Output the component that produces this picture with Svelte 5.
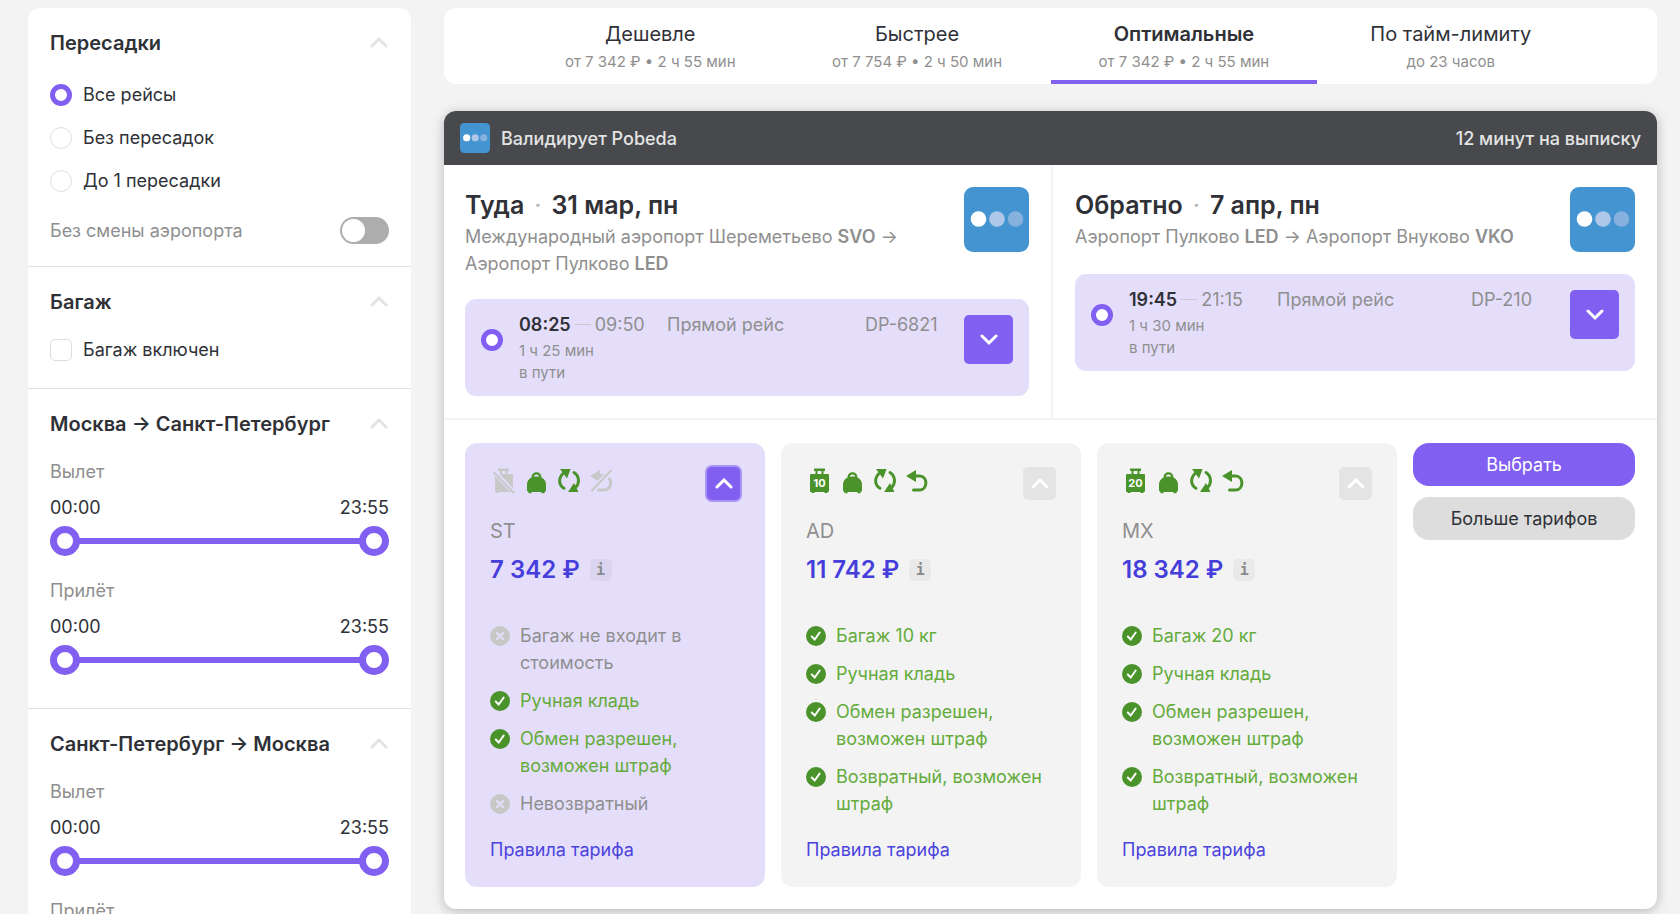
<script>
  const stops = ['Все рейсы', 'Без пересадок', 'До 1 пересадки'];
  let selectedStop = $state('Все рейсы');
  let sameAirport = $state(false);
  let withBaggage = $state(false);

  const directions = $state([
    { title: 'Москва → Санкт-Петербург', ranges: [{ label: 'Вылет', from: 0, to: 1435 }, { label: 'Прилёт', from: 0, to: 1435 }] },
    { title: 'Санкт-Петербург → Москва', ranges: [{ label: 'Вылет', from: 0, to: 1435 }, { label: 'Прилёт', from: 0, to: 1435 }] }
  ]);

  const tabs = [
    { title: 'Дешевле', info: 'от 7 342 ₽ • 2 ч 55 мин' },
    { title: 'Быстрее', info: 'от 7 754 ₽ • 2 ч 50 мин' },
    { title: 'Оптимальные', info: 'от 7 342 ₽ • 2 ч 55 мин' },
    { title: 'По тайм-лимиту', info: 'до 23 часов' }
  ];
  let activeTab = $state(2);

  const flights = [
    {
      name: 'Туда', date: '31 мар, пн',
      from: 'Международный аэропорт Шереметьево', fromCode: 'SVO',
      to: 'Аэропорт Пулково', toCode: 'LED',
      departure: '08:25', arrival: '09:50', duration: '1 ч 25 мин', number: 'DP-6821'
    },
    {
      name: 'Обратно', date: '7 апр, пн',
      from: 'Аэропорт Пулково', fromCode: 'LED',
      to: 'Аэропорт Внуково', toCode: 'VKO',
      departure: '19:45', arrival: '21:15', duration: '1 ч 30 мин', number: 'DP-210'
    }
  ];

  const fares = [
    {
      code: 'ST', price: '7 342 ₽', baggage: 0, refund: false,
      features: [
        { text: 'Багаж не входит в стоимость', ok: false },
        { text: 'Ручная кладь', ok: true },
        { text: 'Обмен разрешен, возможен штраф', ok: true },
        { text: 'Невозвратный', ok: false }
      ]
    },
    {
      code: 'AD', price: '11 742 ₽', baggage: 10, refund: true,
      features: [
        { text: 'Багаж 10 кг', ok: true },
        { text: 'Ручная кладь', ok: true },
        { text: 'Обмен разрешен, возможен штраф', ok: true },
        { text: 'Возвратный, возможен штраф', ok: true }
      ]
    },
    {
      code: 'MX', price: '18 342 ₽', baggage: 20, refund: true,
      features: [
        { text: 'Багаж 20 кг', ok: true },
        { text: 'Ручная кладь', ok: true },
        { text: 'Обмен разрешен, возможен штраф', ok: true },
        { text: 'Возвратный, возможен штраф', ok: true }
      ]
    }
  ];
  let selectedFare = $state('ST');

  function formatTime(minutes) {
    const h = String(Math.floor(minutes / 60)).padStart(2, '0');
    const m = String(minutes % 60).padStart(2, '0');
    return `${h}:${m}`;
  }
</script>

{#snippet chevron(down)}
  <svg class="chevron" viewBox="0 0 20 12" aria-hidden="true">
    <path d={down ? 'M3 2 L10 9 L17 2' : 'M3 9 L10 2 L17 9'} />
  </svg>
{/snippet}

{#snippet logo()}
  <svg class="logo" viewBox="0 0 65 65" aria-hidden="true">
    <rect width="65" height="65" rx="9" fill="#4394d0" />
    <circle cx="14.5" cy="32" r="7.8" fill="#fff" />
    <circle cx="33" cy="32" r="7.8" fill="#afc8ea" />
    <circle cx="51.5" cy="32" r="7.8" fill="#86b0de" />
  </svg>
{/snippet}

{#snippet sectionTitle(text)}
  <div class="section-head">
    <h2>{text}</h2>
    <button type="button" class="collapse" aria-label="Свернуть">{@render chevron(false)}</button>
  </div>
{/snippet}

<div class="page">
  <aside class="filters">
    <section class="transfers">
      {@render sectionTitle('Пересадки')}
      <div class="options">
        {#each stops as stop}
          <label class="option">
            <input type="radio" class="radio" name="stops" value={stop} bind:group={selectedStop} />
            <span>{stop}</span>
          </label>
        {/each}
      </div>
      <label class="switch-row">
        <span>Без смены аэропорта</span>
        <input type="checkbox" role="switch" class="switch" aria-checked={sameAirport} bind:checked={sameAirport} />
      </label>
    </section>

    <section class="baggage">
      {@render sectionTitle('Багаж')}
      <label class="option">
        <input type="checkbox" class="checkbox" bind:checked={withBaggage} />
        <span>Багаж включен</span>
      </label>
    </section>

    {#each directions as direction}
      <section class="times">
        {@render sectionTitle(direction.title)}
        {#each direction.ranges as range}
          <div class="range">
            <p class="range-label">{range.label}</p>
            <div class="range-values">
              <span>{formatTime(range.from)}</span>
              <span>{formatTime(range.to)}</span>
            </div>
            <div class="slider">
              <input type="range" min="0" max="1435" step="5" aria-label="{range.label} от" bind:value={range.from} />
              <input type="range" min="0" max="1435" step="5" aria-label="{range.label} до" bind:value={range.to} />
            </div>
          </div>
        {/each}
      </section>
    {/each}
  </aside>

  <main>
    <nav class="tabs">
      {#each tabs as tab, i}
        <button type="button" class="tab" class:active={i === activeTab} onclick={() => (activeTab = i)}>
          <span class="tab-title">{tab.title}</span>
          <span class="tab-info">{tab.info}</span>
        </button>
      {/each}
    </nav>

    <article class="offer">
      <header class="offer-head">
        <span class="carrier">{@render logo()} Валидирует Pobeda</span>
        <span>12 минут на выписку</span>
      </header>

      <div class="flights">
        {#each flights as flight}
          <section class="flight">
            <div class="flight-head">
              <div>
                <h3>{flight.name}<i>·</i>{flight.date}</h3>
                <p class="route">
                  {flight.from} <b>{flight.fromCode}</b> → {flight.to} <b>{flight.toCode}</b>
                </p>
              </div>
              {@render logo()}
            </div>
            <div class="segment">
              <div class="segment-control">
                <input type="radio" class="radio" name={flight.number} aria-label={flight.number} checked />
              </div>
              <div>
                <p class="hours"><b>{flight.departure}</b><i></i>{flight.arrival}</p>
                <p class="duration">{flight.duration}<br />в пути</p>
              </div>
              <p>Прямой рейс</p>
              <p>{flight.number}</p>
              <button type="button" class="segment-control expand" aria-label="Подробнее">{@render chevron(true)}</button>
            </div>
          </section>
        {/each}
      </div>

      <div class="fares">
        {#each fares as fare}
          <section class="fare" class:selected={fare.code === selectedFare}>
            <div class="fare-head">
              <div class="fare-icons">
                {#if fare.baggage}
                  <svg viewBox="0 0 27 27" aria-hidden="true">
                    <path d="M8 1.5h11v2.6h-1.5V7H22a1 1 0 0 1 1 1v16a1 1 0 0 1-1 1h-.5v1h-3v-1h-10v1h-3v-1H5a1 1 0 0 1-1-1V8a1 1 0 0 1 1-1h4.5V4.1H8z M11.5 4.1V7h4V4.1z" fill-rule="evenodd" />
                    <text x="13.5" y="20">{fare.baggage}</text>
                  </svg>
                {:else}
                  <svg class="off" viewBox="0 0 27 27" aria-hidden="true">
                    <path d="M8 1.5h11V4h-1.5V7H22a1 1 0 0 1 1 1v13.2L10 7.6V4H8z M12 4v3h3.5V4z M5 9.5L20.5 25H9v1H6v-1a1 1 0 0 1-1-1z" fill-rule="evenodd" />
                    <path d="M4 5.5L23.5 25.5" class="line thin" />
                  </svg>
                {/if}
                <svg viewBox="0 0 27 27" aria-hidden="true">
                  <path d="M8.5 10.5C8.5 3.5 18.5 3.5 18.5 10.5C21.5 12 23 14.5 23 17.5V23a2 2 0 0 1-1.5 2v1.2h-3V25h-10v1.2h-3V25A2 2 0 0 1 4 23v-5.5C4 14.5 5.5 12 8.5 10.5z M10.7 9.6h5.6C15.5 6.9 11.5 6.9 10.7 9.6z" fill-rule="evenodd" />
                </svg>
                <svg viewBox="0 0 27 27" aria-hidden="true">
                  <path d="M4 2h10.600l-3.600 9.500z M12 25h10.500l-4.500-9z" />
                  <path d="M7.500 6C2 11 2.500 18 8 21.300 M18 5.500C24 9.500 23.500 17 19.500 20.500" class="line" />
                </svg>
                {#if fare.refund}
                  <svg viewBox="0 0 27 27" aria-hidden="true">
                    <path d="M1 9L11 3v12z" />
                    <path d="M10 9H14.5C23 9 23 23 14.5 23H8.5" class="line" />
                  </svg>
                {:else}
                  <svg class="off" viewBox="0 0 27 27" aria-hidden="true">
                    <path d="M1 9L11 3v4h4.5L8.5 14z" />
                    <path d="M20.5 11.5C23.5 16 21 23 15 23H9.5" class="line" />
                    <path d="M3 23.5L22 3.5" class="line thin" />
                  </svg>
                {/if}
              </div>
              <button type="button" class="fare-toggle" aria-label="Свернуть тариф" onclick={() => (selectedFare = fare.code)}>
                {@render chevron(false)}
              </button>
            </div>
            <p class="fare-code">{fare.code}</p>
            <div class="price">
              <strong>{fare.price}</strong>
              <button type="button" class="info" aria-label="О цене">i</button>
            </div>
            <ul>
              {#each fare.features as feature}
                <li class:ok={feature.ok}>
                  <svg viewBox="0 0 20 20" aria-hidden="true">
                    <circle cx="10" cy="10" r="10" />
                    <path d={feature.ok ? 'M5.8 10.5L8.7 13.5L13.7 6.5' : 'M7 7L13 13M13 7L7 13'} />
                  </svg>
                  <span>{feature.text}</span>
                </li>
              {/each}
            </ul>
            <a href="#rules">Правила тарифа</a>
          </section>
        {/each}

        <div class="actions">
          <button type="button" class="primary">Выбрать</button>
          <button type="button">Больше тарифов</button>
        </div>
      </div>
    </article>
  </main>
</div>

<style>
  :global(body) {
    background: #f3f3f3;
  }

  .page {
    display: grid;
    grid-template-columns: 383px minmax(0, 1fr);
    gap: 33px;
    align-items: start;
    padding: 8px 23px 0 28px;
    font-family: Inter, Roboto, 'Liberation Sans', sans-serif;
    font-size: 18px;
    line-height: 27px;
    color: #2f3137;
  }

  h2,
  h3,
  p,
  ul {
    margin: 0;
    padding: 0;
  }

  button {
    padding: 0;
    border: none;
    background: none;
    font: inherit;
    color: inherit;
    cursor: pointer;
  }

  .chevron {
    width: 20px;
    height: 12px;
    fill: none;
    stroke: currentColor;
    stroke-width: 3;
    stroke-linecap: round;
  }

  .logo {
    flex: none;
    width: 65px;
    height: 65px;
  }

  /* Filters */
  .filters {
    background: #fff;
    border-radius: 12px 12px 0 0;
  }

  .filters section {
    padding: 22px;
  }

  .filters section + section {
    border-top: 1px solid #e1e1e1;
  }

  .filters .baggage {
    padding-bottom: 25px;
  }

  .filters .times {
    padding-bottom: 33px;
  }

  .section-head {
    display: flex;
    justify-content: space-between;
    align-items: center;
    margin-bottom: 20px;
  }

  .section-head h2 {
    font-size: 20px;
    font-weight: 600;
    line-height: 27px;
  }

  .collapse {
    display: flex;
    padding-bottom: 2px;
    color: #e3e3e3;
  }

  .options {
    display: grid;
    gap: 16px;
    margin: 24px 0 23px;
  }

  .option {
    display: flex;
    align-items: center;
    gap: 11px;
  }

  .radio,
  .checkbox {
    appearance: none;
    flex: none;
    width: 22px;
    height: 22px;
    margin: 0;
    border: 1px solid #dedede;
    border-radius: 50%;
    background: #fff;
  }

  .checkbox {
    border-radius: 5px;
  }

  .radio:checked {
    border: 5px solid #815ff0;
  }

  .checkbox:checked {
    background: #815ff0;
  }

  .switch-row {
    display: flex;
    justify-content: space-between;
    align-items: center;
    color: #8f8f8f;
  }

  .switch {
    appearance: none;
    display: flex;
    width: 49px;
    height: 27px;
    margin: 0;
    padding: 2px;
    box-sizing: border-box;
    border-radius: 14px;
    background: #adadad;
  }

  .switch::before {
    content: '';
    width: 23px;
    height: 23px;
    border-radius: 50%;
    background: #fff;
  }

  .switch:checked {
    justify-content: flex-end;
    background: #815ff0;
  }

  .range + .range {
    margin-top: 21px;
  }

  .range-label {
    color: #8f8f8f;
  }

  .range-values {
    display: flex;
    justify-content: space-between;
    margin: 9px 0 5px;
  }

  .slider {
    display: grid;
    align-items: center;
    height: 30px;
    background: linear-gradient(#815ff0, #815ff0) center / calc(100% - 30px) 6px no-repeat;
  }

  .slider input {
    appearance: none;
    grid-area: 1 / 1;
    width: 100%;
    height: 30px;
    margin: 0;
    background: none;
    pointer-events: none;
  }

  .slider input::-webkit-slider-thumb {
    appearance: none;
    width: 30px;
    height: 30px;
    box-sizing: border-box;
    border: 7px solid #815ff0;
    border-radius: 50%;
    background: #fff;
    pointer-events: auto;
  }

  /* Sorting */
  .tabs {
    display: grid;
    grid-template-columns: repeat(4, 22%);
    justify-content: center;
    margin-bottom: 27px;
    border-radius: 12px;
    background: #fff;
  }

  .tab {
    display: flex;
    flex-direction: column;
    align-items: center;
    padding: 13px 0 5px;
    border-bottom: 4px solid transparent;
  }

  .tab.active {
    border-color: #815ff0;
  }

  .tab-title {
    font-size: 20px;
  }

  .active .tab-title {
    font-weight: 600;
  }

  .tab-info {
    font-size: 15px;
    color: #8f8f8f;
  }

  /* Offer */
  .offer {
    border-radius: 12px;
    background: #fff;
    box-shadow: 0 2px 12px rgba(0, 0, 0, 0.25);
  }

  .offer-head {
    display: flex;
    justify-content: space-between;
    align-items: center;
    height: 54px;
    padding: 0 16px;
    border-radius: 12px 12px 0 0;
    background: #47494d;
    font-weight: 500;
    color: #e4e4e4;
  }

  .carrier {
    display: flex;
    align-items: center;
    gap: 11px;
  }

  .carrier .logo {
    width: 30px;
    height: 30px;
  }

  .flights {
    display: grid;
    grid-template-columns: 609fr 604fr;
    border-bottom: 2px solid #f3f3f3;
  }

  .flight {
    padding: 22px 22px 22px 21px;
  }

  .flight + .flight {
    padding-left: 22px;
  }

  .flight:first-child {
    border-right: 2px solid #f3f3f3;
  }

  .flight-head {
    display: flex;
    justify-content: space-between;
    align-items: flex-start;
    gap: 22px;
    margin-bottom: 22px;
  }

  h3 {
    font-size: 25px;
    font-weight: 600;
    line-height: 36px;
  }

  h3 i {
    margin: 0 10px;
    font-style: normal;
    font-weight: 400;
    color: #b5b5b5;
  }

  .route {
    color: #8f8f8f;
  }

  .route b {
    font-weight: 600;
  }

  .segment {
    display: grid;
    grid-template-columns: 38px 148px 1fr 99px 49px;
    align-items: start;
    padding: 12px 16px;
    border-radius: 11px;
    background: #e4defb;
    color: #8f8f8f;
  }

  .segment-control {
    display: flex;
    align-items: center;
    height: 49px;
    margin-top: 4px;
  }

  .expand {
    justify-content: center;
    border-radius: 5px;
    background: #815ff0;
    color: #fff;
  }

  .hours {
    display: flex;
    align-items: center;
    gap: 4px;
  }

  .hours b {
    font-weight: 600;
    color: #2f3137;
  }

  .hours i {
    width: 16px;
    height: 1px;
    background: #cbc8d2;
  }

  .duration {
    margin-top: 2px;
    font-size: 15px;
    line-height: 22px;
  }

  /* Fares */
  .fares {
    display: grid;
    grid-template-columns: repeat(3, 1fr) 222px;
    gap: 16px;
    padding: 23px 22px 22px 21px;
  }

  .fare {
    padding: 24px 25px;
    border-radius: 12px;
    background: #f3f3f3;
  }

  .fare.selected {
    background: #e4defb;
  }

  .fare-head {
    display: flex;
    justify-content: space-between;
    height: 27px;
    margin-bottom: 24px;
  }

  .fare-icons {
    display: flex;
    gap: 6px;
  }

  .fare-icons svg {
    width: 27px;
    height: 27px;
    fill: #4a932a;
    stroke: #4a932a;
    stroke-width: 0;
  }

  .fare-icons .off {
    fill: #c8c8c8;
    stroke: #c8c8c8;
  }

  .fare-icons .line {
    fill: none;
    stroke-width: 3;
    stroke-linecap: round;
  }

  .fare-icons .thin {
    stroke-width: 2;
  }

  .fare-icons text {
    fill: #fff;
    font-size: 11px;
    font-weight: 700;
    text-anchor: middle;
  }

  .fare-toggle {
    display: grid;
    place-items: center;
    width: 33px;
    height: 33px;
    border-radius: 5px;
    background: #e4e4e4;
    color: #fff;
  }

  .selected .fare-toggle {
    background: #815ff0;
    box-shadow: 0 0 0 2px #aa93f5;
  }

  .fare-code {
    font-size: 20px;
    color: #8f8f8f;
  }

  .price {
    display: flex;
    align-items: center;
    gap: 10px;
    margin: 7px 0 34px;
    line-height: 36px;
  }

  .price strong {
    font-size: 24px;
    font-weight: 600;
    color: #453edb;
  }

  .info {
    width: 22px;
    height: 22px;
    border-radius: 5px;
    background: rgba(0, 0, 0, 0.04);
    font: 700 15px/22px 'DejaVu Sans Mono', monospace;
    color: #8a8a8a;
  }

  .fare ul {
    display: grid;
    gap: 11px;
    margin-bottom: 19px;
    list-style: none;
  }

  .fare li {
    display: flex;
    gap: 10px;
    color: #8f8f8f;
  }

  .fare li.ok {
    color: #64ab3c;
  }

  .fare li svg {
    flex: none;
    width: 20px;
    height: 20px;
    margin-top: 4px;
    fill: #c8c8c8;
    stroke: #e4defb;
    stroke-width: 2;
    stroke-linecap: round;
  }

  .fare li.ok svg {
    fill: #4a932a;
    stroke: #fff;
  }

  .fare li circle {
    stroke: none;
  }

  .fare li path {
    fill: none;
  }

  .fare a {
    color: #4b43dd;
    text-decoration: none;
  }

  .actions {
    display: flex;
    flex-direction: column;
    gap: 11px;
  }

  .actions button {
    height: 43px;
    border-radius: 16px;
    background: #ddd;
  }

  .actions .primary {
    background: #815ff0;
    color: #fff;
  }
</style>
